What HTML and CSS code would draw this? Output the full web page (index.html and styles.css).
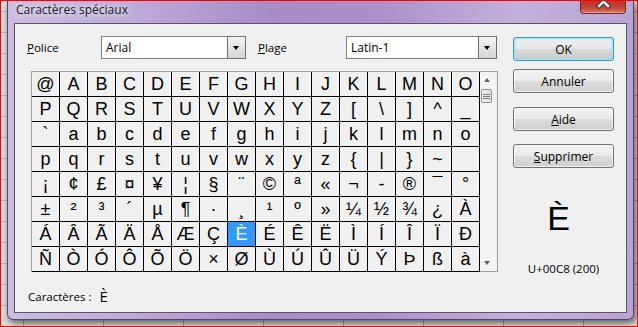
FILE: index.html
```html
<!DOCTYPE html>
<html lang="fr">
<head>
    <meta charset="UTF-8">
    <title>Caractères spéciaux</title>
    <link rel="stylesheet" href="styles.css">
</head>
<body>
    <div class="screen">
        <div class="window">
            <div class="titlebar">
                <span class="title">Caractères spéciaux</span>
                <div class="close-btn">
                    <svg width="46" height="13" viewBox="0 0 46 13">
                        <path d="M19 -4 L28 5 M28 -4 L19 5" stroke="#3d2a2a" stroke-width="4.5" stroke-linecap="square"/>
                        <path d="M19 -4 L28 5 M28 -4 L19 5" stroke="#ffffff" stroke-width="2.5" stroke-linecap="square"/>
                    </svg>
                </div>
            </div>
            <div class="client">
                <div class="left-pane">
                    <div class="font-row">
                        <span class="field-label"><u>P</u>olice</span>
                        <div class="combo combo-font">
                            <span class="combo-text">Arial</span>
                            <div class="combo-arrow"></div>
                        </div>
                        <span class="field-label field-label-range"><u>P</u>lage</span>
                        <div class="combo combo-range">
                            <span class="combo-text">Latin-1</span>
                            <div class="combo-arrow"></div>
                        </div>
                    </div>
                    <div class="char-table">
                        <div class="char-grid" id="charGrid"></div>
                        <div class="scrollbar">
                            <div class="scroll-arrow scroll-up"></div>
                            <div class="scroll-thumb"><span></span><span></span><span></span></div>
                            <div class="scroll-track"></div>
                            <div class="scroll-arrow scroll-down"></div>
                        </div>
                    </div>
                    <div class="chosen-row">
                        <span>Caractères :</span>
                        <span class="chosen-char">È</span>
                    </div>
                </div>
                <div class="right-pane">
                    <button class="btn btn-default">OK</button>
                    <button class="btn btn-cancel">Annuler</button>
                    <button class="btn btn-help"><u>A</u>ide</button>
                    <button class="btn btn-delete"><u>S</u>upprimer</button>
                    <div class="preview">
                        <div class="preview-char">È</div>
                        <div class="preview-code">U+00C8 (200)</div>
                    </div>
                </div>
            </div>
        </div>
    </div>

    <script>
        const grid = document.getElementById('charGrid');
        const codes = [];
        for (let c = 0x40; c <= 0x7e; c++) codes.push(c);
        for (let c = 0xa0; c <= 0xe0; c++) codes.push(c);

        codes.forEach(code => {
            const cell = document.createElement('div');
            cell.className = 'char-cell';
            // soft hyphen is invisible, the dialog shows it as a dash
            cell.textContent = code === 0xad ? '-' : String.fromCharCode(code);
            if (code === 0xc8) cell.classList.add('selected');
            grid.appendChild(cell);
        });
    </script>
</body>
</html>
```

FILE: styles.css
```css
body {
    margin: 0;
    font-family: "Open Sans", "Noto Sans", sans-serif;
    font-size: 11.5px;
    color: #000;
}

.screen {
    width: 638px;
    height: 327px;
    box-sizing: border-box;
    border: 1px solid #ff0000;
    overflow: hidden;
    background-color: #dedede;
    background-image:
        linear-gradient(to right, #a8a8a8 1px, transparent 1px),
        linear-gradient(to bottom, #b4b4b4 1px, transparent 1px);
    background-size: 80px 21px, 80px 21px;
    background-position: 22px 0, 0 10px;
}

.window {
    margin-left: 6px;
    width: 627px;
    height: 319px;
    box-sizing: border-box;
    padding: 0 6px 6px;
    border: 1px solid #54466a;
    border-top: none;
    border-radius: 0 0 6px 6px;
    background: linear-gradient(to right, #cbbde0 0%, #bba8d6 22%, #a68dc6 42%, #a990c8 58%, #c2b1da 82%, #b8a4d4 100%);
    box-shadow: 2px 3px 7px rgba(0, 0, 0, 0.6);
}

.titlebar {
    height: 22px;
    display: flex;
    justify-content: space-between;
    align-items: flex-start;
}

.title {
    margin-left: 2px;
    line-height: 18px;
    font-size: 12px;
    color: #1a1a1a;
    text-shadow: 0 0 6px rgba(255, 255, 255, 0.9), 0 0 10px rgba(255, 255, 255, 0.7);
}

.close-btn {
    width: 46px;
    height: 13px;
    margin-right: 1px;
    box-sizing: border-box;
    border: 1px solid #6e2a22;
    border-top: none;
    border-radius: 0 0 4px 4px;
    background: linear-gradient(to bottom, #b8382a, #c4473a 55%, #d9725f);
    box-shadow: inset 0 -1px 0 rgba(255, 210, 200, 0.5);
    overflow: hidden;
}

.close-btn svg {
    display: block;
    margin-left: -1px;
}

.client {
    height: 290px;
    box-sizing: border-box;
    border: 1px solid #5d5270;
    background-color: #f0f0f0;
    display: flex;
}

.left-pane {
    width: 483px;
    box-sizing: border-box;
    padding: 12px 0 0 12px;
}

.font-row {
    display: flex;
    align-items: center;
    height: 23px;
}

.field-label {
    width: 74px;
    flex-shrink: 0;
}

.field-label-range {
    margin-left: 12px;
    width: 88px;
}

.combo {
    height: 23px;
    box-sizing: border-box;
    border: 1px solid #7f7f7f;
    background-color: #fff;
    display: flex;
    flex-shrink: 0;
}

.combo-font {
    width: 145px;
}

.combo-range {
    width: 151px;
}

.combo-text {
    flex: 1;
    padding-left: 4px;
    line-height: 21px;
    font-size: 12px;
}

.combo-arrow {
    width: 19px;
    margin: -1px -1px -1px 0;
    box-sizing: border-box;
    border: 1px solid #6f6f6f;
    background: linear-gradient(to bottom, #f4f4f4, #e4e4e4 50%, #d6d6d6);
    position: relative;
}

.combo-arrow::after {
    content: "";
    position: absolute;
    left: 5px;
    top: 9px;
    border-left: 3.5px solid transparent;
    border-right: 3.5px solid transparent;
    border-top: 4px solid #000;
}

.char-table {
    margin: 12px 0 0 4px;
    width: 467px;
    box-sizing: border-box;
    border: 1px solid #a0a0a0;
    border-bottom: none;
    display: flex;
}

.char-grid {
    display: grid;
    grid-template-columns: repeat(16, 28px);
    grid-auto-rows: 25px;
}

.char-cell {
    box-sizing: border-box;
    border-right: 1px solid #000;
    border-bottom: 1px solid #000;
    text-align: center;
    line-height: 24px;
    font-family: "Liberation Sans", Arial, sans-serif;
    font-size: 18px;
    color: #000;
}

.char-cell.selected {
    background-color: #3399ff;
    color: #fff;
}

.scrollbar {
    flex: 1;
    box-sizing: border-box;
    border-bottom: 1px solid #a0a0a0;
    background-color: #f4f4f4;
    display: flex;
    flex-direction: column;
}

.scroll-arrow {
    height: 16px;
    position: relative;
}

.scroll-arrow::after {
    content: "";
    position: absolute;
    left: 4px;
    border-left: 3.5px solid transparent;
    border-right: 3.5px solid transparent;
}

.scroll-up::after {
    top: 6px;
    border-bottom: 4px solid #606060;
}

.scroll-down::after {
    top: 6px;
    border-top: 4px solid #606060;
}

.scroll-thumb {
    margin: 1px 0 0 1px;
    width: 11px;
    height: 14px;
    box-sizing: border-box;
    border: 1px solid #8e8f8f;
    border-radius: 2px;
    background: linear-gradient(to right, #f2f2f2, #e0e0e0);
    display: flex;
    flex-direction: column;
    align-items: center;
    justify-content: center;
    gap: 1px;
}

.scroll-thumb span {
    width: 7px;
    height: 1px;
    background-color: #7c7c7c;
}

.scroll-track {
    flex: 1;
}

.chosen-row {
    margin: 15px 0 0 1px;
    display: flex;
    align-items: center;
    gap: 8px;
    height: 18px;
}

.chosen-char {
    font-size: 15px;
}

.right-pane {
    width: 101px;
    margin-left: 15px;
    padding-top: 13px;
    display: flex;
    flex-direction: column;
}

.btn {
    height: 24px;
    width: 101px;
    box-sizing: border-box;
    border: 1px solid #707070;
    border-radius: 3px;
    background: linear-gradient(to bottom, #f2f2f2 0%, #ebebeb 50%, #dddddd 51%, #cfcfcf 100%);
    box-shadow: inset 0 0 0 1px rgba(255, 255, 255, 0.7);
    font-family: inherit;
    font-size: 12px;
    color: #000;
    padding: 0;
}

.btn-default {
    border-color: #3399cc;
    box-shadow: inset 0 0 0 1px #a6e8fb, inset 0 0 3px #5ccff5;
    background: linear-gradient(to bottom, #f0f0f0 0%, #e6e6e6 50%, #d8d8d8 51%, #cbcbcb 100%);
}

.btn-cancel {
    margin-top: 8px;
}

.btn-help {
    margin-top: 14px;
}

.btn-delete {
    margin-top: 13px;
}

.preview {
    padding-right: 10px;
    text-align: center;
}

.preview-char {
    margin-top: 30px;
    font-family: "Liberation Sans", Arial, sans-serif;
    font-size: 34px;
    line-height: 40px;
}

.preview-code {
    margin-top: 23px;
    padding-left: 10px;
    line-height: 16px;
    font-size: 11.5px;
}
```
